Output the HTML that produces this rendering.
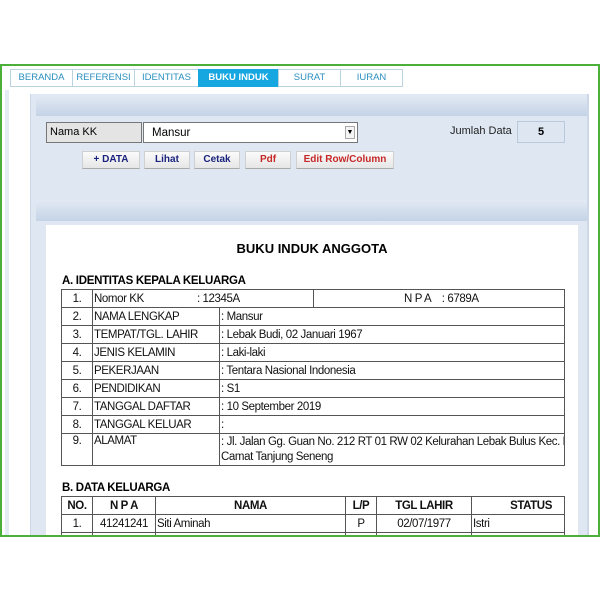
<!DOCTYPE html>
<html><head><meta charset="utf-8"><style>
*{margin:0;padding:0;box-sizing:border-box}
body{width:600px;height:600px;background:#fff;position:relative;overflow:hidden;font-family:"Liberation Sans",Arial,sans-serif}
.a{position:absolute}
.frame{left:0;top:64px;width:600px;height:474px;border:2px solid #4caf3a;background:#fff}
.tab{top:69px;height:18px;border:1px solid #b9d3e0;background:#fff;color:#2a8fbf;font-size:9.5px;text-align:center;line-height:16px}
.band{background:linear-gradient(#e3eaf4,#c4d3e6);}
.btn{top:151px;height:18px;background:linear-gradient(#fbfbfb,#e6e6e6);border:1px solid #d0d0d0;border-bottom-color:#aaa;font-size:10px;font-weight:bold;text-align:center;line-height:16px}
table{border-collapse:collapse;position:absolute;font-size:11.5px;color:#111;table-layout:fixed;letter-spacing:-0.4px}
td{border:1px solid #555;height:18px;padding:0 1px;white-space:nowrap;overflow:hidden}
.h{font-weight:bold;font-size:11.5px;letter-spacing:-0.3px}
</style></head><body>
<div class="a frame"></div>
<div class="a" style="left:5px;top:90px;width:4px;height:445px;background:#e4ecf5"></div>
<div class="a tab" style="left:10px;width:63px">BERANDA</div>
<div class="a tab" style="left:72px;width:63px">REFERENSI</div>
<div class="a tab" style="left:134px;width:65px">IDENTITAS</div>
<div class="a tab" style="left:198px;width:81px;background:#16a6e0;color:#fff;border-color:#16a6e0;font-weight:bold">BUKU INDUK</div>
<div class="a tab" style="left:278px;width:63px">SURAT</div>
<div class="a tab" style="left:340px;width:63px">IURAN</div>
<div class="a" style="left:30px;top:94px;width:559px;height:442px;background:#dfe7f2;border-left:1px solid #ccd8e8;border-right:2px solid #ccd8e8"></div>
<div class="a band" style="left:36px;top:95px;width:551px;height:21px"></div>
<div class="a band" style="left:36px;top:200px;width:551px;height:21px"></div>
<div class="a" style="left:46px;top:122px;width:96px;height:21px;background:#e4e4e4;border:1px solid #777;font-size:11px;line-height:18px;padding-left:3px">Nama KK</div>
<div class="a" style="left:143px;top:122px;width:215px;height:21px;background:#fff;border:1px solid #777;font-size:11.5px;line-height:20px;padding-left:8px">Mansur
<div class="a" style="right:2px;top:3px;width:10px;height:13px;border:1px solid #aaa;background:#f4f4f4;font-size:7px;line-height:12px;text-align:center">▼</div></div>
<div class="a" style="left:450px;top:125px;font-size:11px;color:#222">Jumlah Data</div>
<div class="a" style="left:517px;top:121px;width:48px;height:22px;border:1px solid #b8c9dc;background:#dde6f1;font-size:11px;font-weight:bold;text-align:center;line-height:20px">5</div>
<div class="a btn" style="left:82px;width:58px;color:#1a237e">+ DATA</div>
<div class="a btn" style="left:144px;width:46px;color:#1a237e">Lihat</div>
<div class="a btn" style="left:194px;width:46px;color:#1a237e">Cetak</div>
<div class="a btn" style="left:245px;width:46px;color:#c62828">Pdf</div>
<div class="a btn" style="left:296px;width:98px;color:#c62828">Edit Row/Column</div>
<div class="a" style="left:46px;top:225px;width:532px;height:311px;background:#fff"></div>
<div class="a" style="left:46px;top:241px;width:532px;text-align:center;font-size:13px;font-weight:bold">BUKU INDUK ANGGOTA</div>
<div class="a h" style="left:62px;top:275px">A. IDENTITAS KEPALA KELUARGA</div>
<table style="left:61px;top:289px;width:503px">
<colgroup><col style="width:31px"><col style="width:127px"><col style="width:94px"><col style="width:251px"></colgroup>
<tr><td style="text-align:center">1.</td><td colspan="2">Nomor KK&nbsp;&nbsp;&nbsp;&nbsp;&nbsp;&nbsp;&nbsp;&nbsp;&nbsp;&nbsp;&nbsp;&nbsp;&nbsp;&nbsp;&nbsp;&nbsp;&nbsp;&nbsp;&nbsp;: 12345A</td><td style="padding-left:90px">N P A &nbsp;&nbsp;&nbsp;: 6789A</td></tr>
<tr><td style="text-align:center">2.</td><td>NAMA LENGKAP</td><td colspan="2">: Mansur</td></tr>
<tr><td style="text-align:center">3.</td><td>TEMPAT/TGL. LAHIR</td><td colspan="2">: Lebak Budi, 02 Januari 1967</td></tr>
<tr><td style="text-align:center">4.</td><td>JENIS KELAMIN</td><td colspan="2">: Laki-laki</td></tr>
<tr><td style="text-align:center">5.</td><td>PEKERJAAN</td><td colspan="2">: Tentara Nasional Indonesia</td></tr>
<tr><td style="text-align:center">6.</td><td>PENDIDIKAN</td><td colspan="2">: S1</td></tr>
<tr><td style="text-align:center">7.</td><td>TANGGAL DAFTAR</td><td colspan="2">: 10 September 2019</td></tr>
<tr><td style="text-align:center">8.</td><td>TANGGAL KELUAR</td><td colspan="2">:</td></tr>
<tr><td style="text-align:center;vertical-align:top;height:32px;padding-top:1px">9.</td><td style="vertical-align:top;padding-top:1px">ALAMAT</td><td colspan="2" style="white-space:nowrap;line-height:15px;vertical-align:top;padding-top:1px">: Jl. Jalan Gg. Guan No. 212 RT 01 RW 02 Kelurahan Lebak Bulus Kec. Bu<br>Camat Tanjung Seneng</td></tr>
</table>
<div class="a h" style="left:62px;top:482px">B. DATA KELUARGA</div>
<table style="left:61px;top:496px;width:503px">
<colgroup><col style="width:31px"><col style="width:63px"><col style="width:190px"><col style="width:31px"><col style="width:95px"><col style="width:93px"></colgroup>
<tr style="font-weight:bold;text-align:center"><td>NO.</td><td>N P A</td><td>NAMA</td><td>L/P</td><td>TGL LAHIR</td><td style="text-align:right;padding-right:12px">STATUS</td></tr>
<tr><td style="text-align:center">1.</td><td style="text-align:center">41241241</td><td>Siti Aminah</td><td style="text-align:center">P</td><td style="text-align:center">02/07/1977</td><td>Istri</td></tr>
<tr><td style="text-align:center">2.</td><td style="text-align:center">41241242</td><td>Kasyanto</td><td style="text-align:center">L</td><td style="text-align:center">05/01/1990</td><td>Anak</td></tr>
</table>
<div class="a" style="left:0;top:535px;width:600px;height:2px;background:#4caf3a"></div>
<div class="a" style="left:0;top:537px;width:600px;height:63px;background:#fff"></div>
</body></html>
